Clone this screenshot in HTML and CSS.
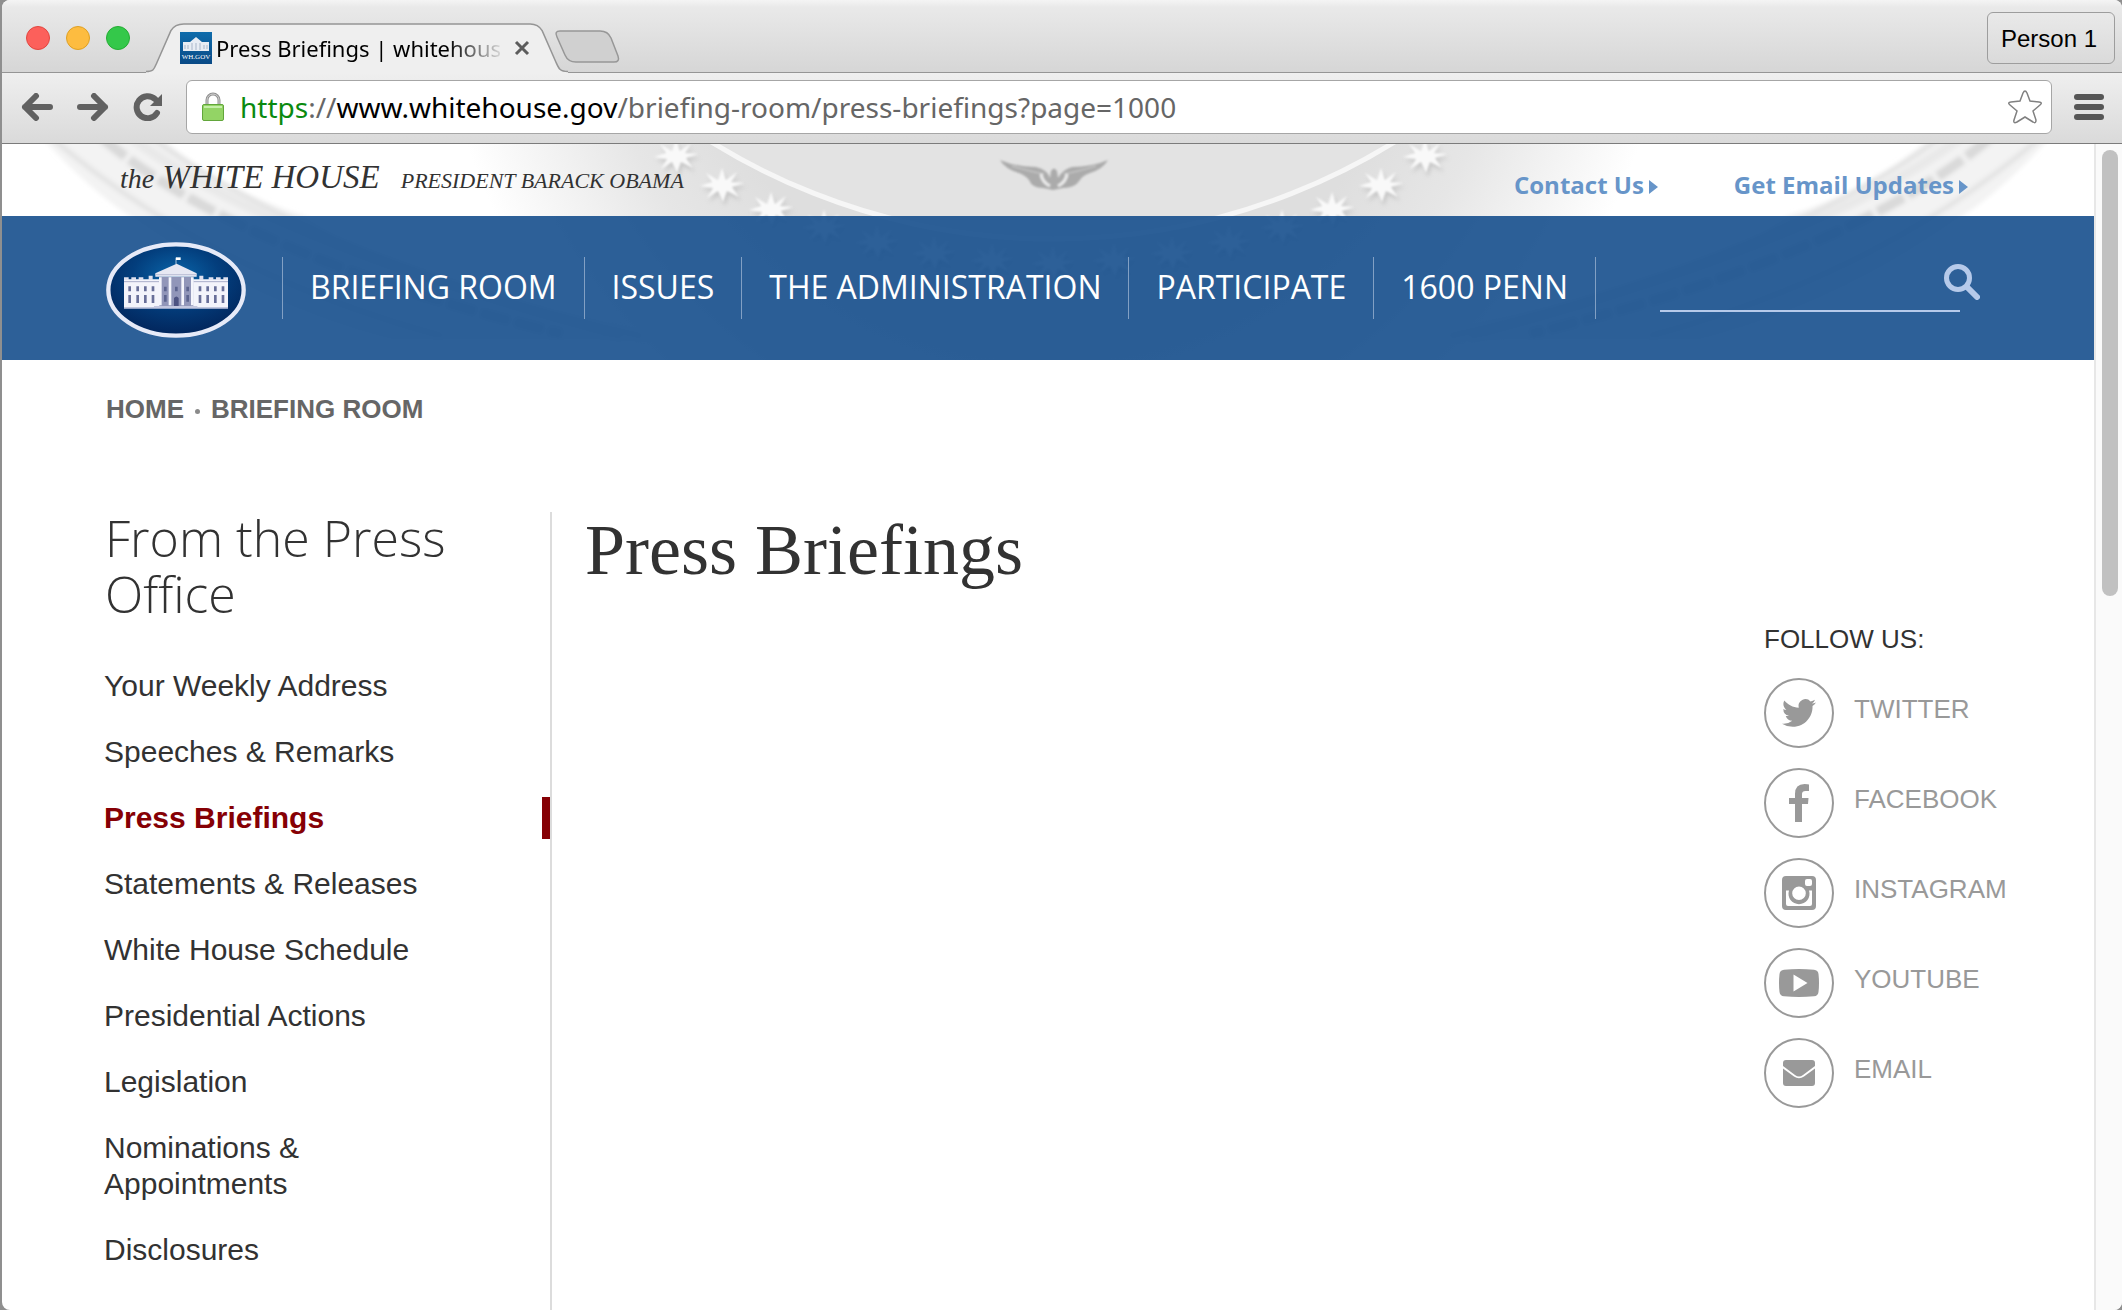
FILE: index.html
```
<!DOCTYPE html>
<html lang="en">
<head>
    <meta charset="UTF-8">
    <meta name="viewport" content="width=device-width, initial-scale=1.0">
    <title>Press Briefings | whitehouse.gov</title>
    <link rel="stylesheet" href="styles.css">
</head>
<body>
<div class="window">
    <!-- Tab strip -->
    <div class="tabstrip">
        <div class="lights">
            <button class="light red" aria-label="Close"></button>
            <button class="light yellow" aria-label="Minimize"></button>
            <button class="light green" aria-label="Zoom"></button>
        </div>
        <div class="tab">
            <svg class="tab-shape" viewBox="0 0 430 52" preserveAspectRatio="none">
                <path d="M0 50.500C8 50.500 8 48 11 41L25 8Q29 1 38 1H386Q394 1 398 8L412 41C415 48 416 50.500 424 50.500V52H0Z" fill="#efefef"/>
                <path d="M0 50.500C8 50.500 8 48 11 41L25 8Q29 1 38 1H386Q394 1 398 8L412 41C415 48 416 50.500 424 50.500" fill="none" stroke="#959595" stroke-width="1.500"/>
            </svg>
            <svg class="favicon" viewBox="0 0 32 32">
                <defs>
                    <linearGradient id="favbg" x2="0" y2="1">
                        <stop offset="0" stop-color="#0f6cab"/>
                        <stop offset="1" stop-color="#0a4a86"/>
                    </linearGradient>
                </defs>
                <rect width="32" height="32" fill="url(#favbg)"/>
                <path d="M3 10h7l6-5 6 5h7v9H3Z" fill="#e8edf4"/>
                <path d="M5 13v4M8 13v4M12 11v7M16 11v7M20 11v7M24 13v4M27 13v4" stroke="#a9b6c9"/>
                <text x="16" y="27" text-anchor="middle">WH.GOV</text>
            </svg>
            <span class="tab-title">Press Briefings | whitehous</span>
            <button class="tab-close" aria-label="Close tab">
                <svg viewBox="0 0 16 16" width="16" height="16"><path d="M2 2L14 14M14 2L2 14" stroke="#5c5c5c" stroke-width="3"/></svg>
            </button>
        </div>
        <button class="new-tab" aria-label="New tab">
            <svg viewBox="0 0 66 34" width="66" height="34"><path d="M6 1H46Q54 1 57 8L64 26Q66 32 60 32H22Q14 32 11 25L3 7Q0 1 6 1Z" fill="#d0d0d0" stroke="#979797" stroke-width="1.500"/></svg>
        </button>
        <button class="person">Person 1</button>
    </div>

    <!-- Toolbar -->
    <div class="toolbar">
        <button class="tool" aria-label="Back">
            <svg viewBox="0 0 32 28" width="32" height="28"><path d="M15 3L4 14L15 25M4 14H29" /></svg>
        </button>
        <button class="tool" aria-label="Forward">
            <svg viewBox="0 0 32 28" width="32" height="28"><path d="M17 3L28 14L17 25M28 14H3" /></svg>
        </button>
        <button class="tool" aria-label="Reload">
            <svg viewBox="0 0 32 28" width="32" height="28"><path d="M24 20A11 11 0 1 1 22 6" /><path class="solid" d="M29 1V13H17Z"/></svg>
        </button>
        <div class="address">
            <svg class="lock" viewBox="0 0 24 30" width="24" height="30">
                <path d="M6 14V8a6 6 0 0 1 12 0v6" fill="none" stroke="#909090" stroke-width="3"/>
                <path d="M6 14V8a6 6 0 0 1 12 0v6" fill="none" stroke="#d2d2d2"/>
                <rect x="1.500" y="12.500" width="21" height="16" rx="1.500" fill="#93d465" stroke="#62a63b"/>
                <path d="M3 15H21" stroke="#c5efa8" stroke-width="2"/>
            </svg>
            <div class="url" role="textbox" aria-label="Address"><span class="scheme">https</span>://<span class="host">www.whitehouse.gov</span>/briefing-room/press-briefings?page=1000</div>
            <button class="star" aria-label="Bookmark">
                <svg viewBox="0 0 36 36" width="36" height="36"><path d="M18 2Q19 2 20 4L23 12L32 13Q36 13.500 33 16L26 22L29 31Q29 35 26 33L18 28L10 33Q6 35 7 31L10 22L3 16Q0 13.500 4 13L13 12L16 4Q17 2 18 2Z" fill="#fff" stroke="#808080" stroke-width="1.500"/></svg>
            </button>
        </div>
        <button class="menu" aria-label="Menu"><i></i><i></i><i></i></button>
    </div>

    <div class="viewport">
        <div class="page">
            <header class="header">
                <!-- Presidential seal behind the header -->
                <svg class="seal" viewBox="0 0 2092 216" preserveAspectRatio="xMidYMin slice" aria-hidden="true">
                    <defs>
                        <radialGradient id="fade" gradientUnits="userSpaceOnUse" cx="1051" cy="-200" r="620">
                            <stop offset="0.600" stop-color="#dedede"/>
                            <stop offset="0.750" stop-color="#e6e6e6"/>
                            <stop offset="1" stop-color="#fff"/>
                        </radialGradient>
                        <filter id="soft"><feGaussianBlur stdDeviation="2"/></filter>
                        <filter id="edge"><feGaussianBlur stdDeviation="1"/></filter>
                        <g id="star">
                            <path d="M0-17L4-5L15-13L9-3L22-2L10 2L17 12L5 6L1 17L-4 6L-15 13L-9 3L-22 1L-10-3L-16-12L-4-5Z"/>
                        </g>
                        <g id="stars">
                            <use href="#star" x="674" y="12"/><use href="#star" x="720" y="41"/><use href="#star" x="769" y="65"/><use href="#star" x="822" y="83"/>
                            <use href="#star" x="875" y="98"/><use href="#star" x="932" y="109"/><use href="#star" x="990" y="116"/><use href="#star" x="1051" y="119"/>
                            <use href="#star" x="1112" y="116"/><use href="#star" x="1170" y="109"/><use href="#star" x="1227" y="98"/><use href="#star" x="1280" y="83"/>
                            <use href="#star" x="1330" y="65"/><use href="#star" x="1379" y="41"/><use href="#star" x="1423" y="12"/>
                        </g>
                        <g id="ribbon" filter="url(#soft)">
                            <path d="M40-6H160Q220 46 303 72Q410 150 560 168Q610 184 652 196H390Q250 160 128 72Q90 48 40-6Z" fill="#f3f3f3"/>
                            <path d="M100-6Q240 112 560 190" fill="none" stroke="#d9d9d9" stroke-width="10" stroke-dasharray="30 5"/>
                            <path d="M130-6Q270 100 620 192" fill="none" stroke="#e9e9e9" stroke-width="10"/>
                            <path d="M50-6Q210 130 440 192M150-6Q310 112 640 192" fill="none" stroke="#e3e3e3" stroke-width="5"/>
                        </g>
                    </defs>
                    <rect width="2092" height="216" fill="#fff"/>
                    <rect x="430" width="1242" height="216" fill="url(#fade)"/>
                    <use href="#ribbon"/>
                    <use href="#ribbon" transform="translate(2088 0) scale(-1 1)"/>
                    <circle cx="1051" cy="-554" r="649" fill="#e3e3e3" stroke="#f6f6f6" stroke-width="5"/>
                    <use href="#stars" fill="#bdbdbd" opacity="0.700" transform="translate(2 4)" filter="url(#soft)"/>
                    <use href="#stars" fill="#f9f9f9" filter="url(#edge)"/>
                    <g filter="url(#edge)">
                        <path d="M998 16Q1014 23 1034 23Q1046 26 1048 34L1049 27Q1052 22 1055 27L1056 34Q1060 26 1070 23Q1090 23 1106 16Q1101 25 1088 29Q1080 32 1078 36Q1073 44 1061 44L1051 46L1041 44Q1030 44 1027 36Q1024 32 1017 29Q1003 25 998 16Z" fill="#ababab"/>
                        <path d="M1010 22Q1030 28 1042 30M1094 22Q1074 28 1062 30" fill="none" stroke="#d0d0d0" stroke-width="1"/>
                        <path d="M1039 30Q1040 38 1048 42M1065 30Q1064 38 1056 42" fill="none" stroke="#ececec" stroke-width="3"/>
                    </g>
                </svg>

                <div class="masthead">
                    <a href="#" class="brand"><span class="brand-the">the</span> WHITE HOUSE</a>
                    <a href="#" class="president">PRESIDENT BARACK OBAMA</a>
                    <div class="links">
                        <a href="#">Contact Us</a>
                        <a href="#">Get Email Updates</a>
                    </div>
                </div>

                <nav class="nav">
                    <a href="#" class="logo" aria-label="The White House">
                        <svg viewBox="0 0 420 288" width="140" height="96">
                            <defs>
                                <radialGradient id="oval" cx="0.500" cy="0.350" r="0.650">
                                    <stop offset="0" stop-color="#0a66aa"/>
                                    <stop offset="0.500" stop-color="#033e7d"/>
                                    <stop offset="1" stop-color="#02255b"/>
                                </radialGradient>
                            </defs>
                            <ellipse cx="210" cy="144" rx="203" ry="137" fill="url(#oval)" stroke="#e6eaf8" stroke-width="13"/>
                            <path d="M54 112H366V197H54Z" fill="#f3f4fb"/>
                            <path d="M54 106h14v8H54zM76 106h14v8H76zM98 106h14v8H98zM128 101h12v13h-12zM280 101h12v13h-12zM308 106h14v8h-14zM330 106h14v8h-14zM352 106h14v8h-14z" fill="#dfe1ef"/>
                            <path d="M54 119H366" stroke="#aaaec9" stroke-width="3"/>
                            <path d="M160 104H262V197H160Z" fill="#9196b9"/>
                            <path d="M148 94L212 65L272 94V104H148Z" fill="#e7e8f3"/>
                            <path d="M148 98H272" stroke="#babdd5" stroke-width="3"/>
                            <path d="M163 106V190M192 106V190M230 106V190M259 106V190" stroke="#f4f5fc" stroke-width="8"/>
                            <path d="M178 134v14M178 159v20M211 134v14M245 134v14M245 159v20" stroke="#5c648f" stroke-width="8"/>
                            <path d="M204 195v-27q7-9 14 0v27z" fill="#4d5382"/>
                            <path d="M71 133v15M95 133v15M118 133v15M141 133v15M282 133v15M305 133v15M328 133v15M351 133v15M71 159v24M95 159v24M118 159v24M141 159v24M282 159v24M305 159v24M328 159v24M351 159v24" stroke="#686f99" stroke-width="8"/>
                            <path d="M54 198H366M144 194H274" stroke="#c3c7df" stroke-width="4"/>
                            <path d="M210 67V47" stroke="#fff" stroke-width="2"/>
                            <path d="M210 46h14v8h-14z" fill="#fff"/>
                        </svg>
                    </a>
                    <ul class="nav-list">
                        <li><a href="#">BRIEFING ROOM</a></li>
                        <li><a href="#">ISSUES</a></li>
                        <li><a href="#">THE ADMINISTRATION</a></li>
                        <li><a href="#">PARTICIPATE</a></li>
                        <li><a href="#">1600 PENN</a></li>
                    </ul>
                    <form class="search">
                        <input type="text" aria-label="Search">
                        <button type="button" aria-label="Search">
                            <svg viewBox="0 0 36 36" width="36" height="36"><circle cx="14" cy="14" r="11.500" fill="none" stroke="#b6caea" stroke-width="5"/><path d="M23 23L33 33" stroke="#b6caea" stroke-width="6" stroke-linecap="round"/></svg>
                        </button>
                    </form>
                </nav>
            </header>

            <div class="breadcrumb">
                <a href="#">HOME</a><span class="dot"></span><a href="#">BRIEFING ROOM</a>
            </div>

            <div class="content">
                <aside class="sidebar">
                    <h2>From the Press Office</h2>
                    <ul>
                        <li><a href="#">Your Weekly Address</a></li>
                        <li><a href="#">Speeches &amp; Remarks</a></li>
                        <li class="active"><a href="#">Press Briefings</a></li>
                        <li><a href="#">Statements &amp; Releases</a></li>
                        <li><a href="#">White House Schedule</a></li>
                        <li><a href="#">Presidential Actions</a></li>
                        <li><a href="#">Legislation</a></li>
                        <li><a href="#">Nominations &amp; Appointments</a></li>
                        <li><a href="#">Disclosures</a></li>
                    </ul>
                </aside>

                <main class="main">
                    <h1>Press Briefings</h1>
                </main>

                <div class="follow">
                    <h3>FOLLOW US:</h3>
                    <a href="#">
                        <span class="circle"><svg viewBox="0 0 24 24" width="34" height="34"><path d="M23.950 4.570a10 10 0 0 1-2.820.770 4.960 4.960 0 0 0 2.160-2.720c-.950.550-2.010.960-3.130 1.180a4.920 4.920 0 0 0-8.380 4.480C7.690 8.090 4.070 6.130 1.640 3.160a4.820 4.820 0 0 0-.670 2.480c0 1.710.870 3.210 2.190 4.100a4.900 4.900 0 0 1-2.230-.620v.060a4.920 4.920 0 0 0 3.950 4.830 5 5 0 0 1-2.210.080 4.940 4.940 0 0 0 4.600 3.420A9.870 9.870 0 0 1 0 19.540a13.990 13.990 0 0 0 7.550 2.210c9.050 0 14-7.500 14-13.980 0-.210 0-.420-.020-.630a9.940 9.940 0 0 0 2.460-2.550z"/></svg></span>
                        <span class="name">TWITTER</span>
                    </a>
                    <a href="#">
                        <span class="circle"><svg viewBox="0 0 20 38" width="20" height="38"><path d="M20 .500V7H16.500Q13 7 13 10V14H19.500L19 20H13V38H6V20H0V14H6V10Q6 0 15.500 0Q19 0 20 .500Z"/></svg></span>
                        <span class="name">FACEBOOK</span>
                    </a>
                    <a href="#">
                        <span class="circle"><svg viewBox="0 0 34 34" width="34" height="34"><path fill-rule="evenodd" d="M4 0H30Q34 0 34 4V30Q34 34 30 34H4Q0 34 0 30V4Q0 0 4 0ZM25 3Q23 3 23 5V8Q23 10 25 10H28Q30 10 30 8V5Q30 3 28 3ZM4 14.500V28Q4 30 6 30H28Q30 30 30 28V14.500H27A10.500 10.500 0 1 1 7 14.500ZM17 10.500A6.800 6.800 0 1 0 17 24.100A6.800 6.800 0 1 0 17 10.500Z"/></svg></span>
                        <span class="name">INSTAGRAM</span>
                    </a>
                    <a href="#">
                        <span class="circle"><svg viewBox="0 0 40 28" width="40" height="28"><path fill-rule="evenodd" d="M5 .700Q20-.700 35 .700Q39 1 39.500 5Q40.500 14 39.500 23Q39 27 35 27.300Q20 28.700 5 27.300Q1 27 .500 23Q-.500 14 .500 5Q1 1 5 .700ZM14.500 5.500V22.500L28.500 14Z"/></svg></span>
                        <span class="name">YOUTUBE</span>
                    </a>
                    <a href="#">
                        <span class="circle"><svg viewBox="0 0 32 26" width="32" height="26"><path d="M3 0H29Q32 0 32 3V6L20 15Q16 18 12 15L0 6V3Q0 0 3 0Z"/><path d="M0 8.500L11 16.500Q16 20 21 16.500L32 8.500V23Q32 26 29 26H3Q0 26 0 23Z"/></svg></span>
                        <span class="name">EMAIL</span>
                    </a>
                </div>
            </div>
        </div>
        <div class="scrollbar"><div class="thumb"></div></div>
    </div>
</div>
</body>
</html>
```
FILE: styles.css
```
* {
    box-sizing: border-box;
}

body {
    margin: 0;
    background-color: #8f8f8f;
    font-family: "Liberation Sans", Arial, sans-serif;
    color: #323232;
}

a {
    color: inherit;
    text-decoration: none;
}

button {
    padding: 0;
    border: none;
    background: none;
    font-family: inherit;
    cursor: pointer;
}

ul {
    list-style: none;
    margin: 0;
    padding: 0;
}

svg {
    display: block;
}

.window {
    display: flex;
    flex-direction: column;
    height: 100vh;
    margin-left: 2px;
    border-radius: 8px;
    overflow: hidden;
    background-color: #fff;
}

/* tab strip */
.tabstrip {
    display: flex;
    align-items: flex-end;
    height: 73px;
    padding-right: 7px;
    border-bottom: 1px solid #959595;
    background: linear-gradient(#f4f4f4, #e9e9e9 10%, #d6d6d6);
}

.lights {
    display: flex;
    gap: 16px;
    padding: 0 16px 22px 24px;
}

.light {
    width: 24px;
    height: 24px;
    border-radius: 50%;
}

.red {
    background-color: #fc605b;
    border: 1px solid #e2463f;
}

.yellow {
    background-color: #fdbc40;
    border: 1px solid #dfa023;
}

.green {
    background-color: #34c84a;
    border: 1px solid #24ad33;
}

.tab {
    position: relative;
    display: flex;
    align-items: center;
    width: 428px;
    height: 50px;
    margin-bottom: -1px;
    padding: 0 44px 0 34px;
}

.tab-shape {
    position: absolute;
    left: 0;
    top: 0;
    width: 100%;
    height: 100%;
}

.favicon {
    position: relative;
    flex: none;
    width: 32px;
    height: 32px;
}

.favicon text {
    font: 7px "Liberation Serif", serif;
    fill: #fff;
}

.tab-title {
    position: relative;
    flex: 1;
    margin: 0 8px 0 4px;
    white-space: nowrap;
    font: 22px "Noto Sans", sans-serif;
    color: #000;
    -webkit-mask-image: linear-gradient(to right, #000 80%, transparent);
    mask-image: linear-gradient(to right, #000 80%, transparent);
}

.tab-close {
    position: relative;
}

.new-tab {
    margin: 0 auto 8px -20px;
}

.person {
    width: 128px;
    height: 52px;
    margin-bottom: 8px;
    padding: 2px 4px 0 0;
    border: 1px solid #9d9d9d;
    border-radius: 6px;
    background: linear-gradient(#e9e9e9, #dadada);
    font-size: 24px;
    color: #000;
}

/* toolbar */
.toolbar {
    display: flex;
    align-items: center;
    height: 71px;
    padding: 0 18px 2px 19px;
    border-bottom: 1px solid #7b7b7b;
    background: linear-gradient(#efefef, #dadada);
}

.tool {
    margin-right: 24px;
}

.tool svg {
    fill: none;
    stroke: #616161;
    stroke-width: 6;
    stroke-linecap: round;
    stroke-linejoin: round;
}

.tool .solid {
    fill: #616161;
    stroke: none;
}

.address {
    display: flex;
    align-items: center;
    flex: 1;
    height: 54px;
    margin-right: 22px;
    margin-left: -3px;
    padding: 0 8px 0 14px;
    border: 1px solid #a6a6a6;
    border-radius: 6px;
    background-color: #fff;
}

.url {
    flex: 1;
    margin-left: 15px;
    font: 28px "Noto Sans", sans-serif;
    color: #666;
}

.scheme {
    color: #0a8a0f;
}

.host {
    color: #000;
}

.menu {
    display: flex;
    flex-direction: column;
    gap: 4px;
}

.menu i {
    width: 30px;
    height: 6px;
    border-radius: 3px;
    background-color: #565656;
}

/* page */
.viewport {
    display: flex;
    flex: 1;
    min-height: 0;
}

.page {
    display: flex;
    flex-direction: column;
    flex: 1;
}

.scrollbar {
    width: 28px;
    padding: 6px 3px 0 6px;
    border-left: 2px solid #e7e7e7;
    background-color: #fafafa;
}

.thumb {
    width: 16px;
    height: 446px;
    border-radius: 8px;
    background-color: #c1c1c1;
}

.header {
    position: relative;
}

.seal {
    position: absolute;
    left: 0;
    top: 0;
    width: 100%;
    height: 100%;
}

.masthead {
    position: relative;
    display: flex;
    align-items: baseline;
    height: 72px;
    padding: 15px 126px 0 118px;
    font-family: "Liberation Serif", serif;
    font-style: italic;
}

.brand {
    font-size: 33px;
}

.brand-the {
    font-size: 28px;
}

.president {
    margin-left: 21px;
    font-size: 22px;
}

.links {
    display: flex;
    align-self: flex-start;
    gap: 76px;
    margin: 9px 0 0 auto;
    font: bold 24px/34px "Open Sans", sans-serif;
    color: #6795c9;
}

.links a {
    display: flex;
    align-items: center;
    gap: 5px;
}

.links a::after {
    content: "";
    margin-top: 3px;
    border: 7px solid transparent;
    border-left: 9px solid #6795c9;
    border-right: none;
}

.nav {
    position: relative;
    display: flex;
    align-items: center;
    height: 144px;
    padding: 0 114px 0 104px;
    background-color: rgba(22, 79, 141, 0.9);
}

.logo {
    margin: 4px 36px 0 0;
}

.nav-list {
    display: flex;
    border-right: 1px solid #82a0c4;
}

.nav-list li {
    padding: 0 27px;
    border-left: 1px solid #82a0c4;
    font: 32px/64px "Open Sans", sans-serif;
    color: #fff;
}

.nav-list a {
    display: block;
    margin-top: -2px;
}

.search {
    display: flex;
    margin-left: auto;
}

.search input {
    width: 300px;
    height: 48px;
    margin-right: -16px;
    border: none;
    border-bottom: 2px solid #b6caea;
    outline: none;
    background: none;
    font-size: 24px;
    color: #fff;
}

.search button {
    align-self: flex-start;
}

.breadcrumb {
    display: flex;
    align-items: center;
    padding: 34px 104px 0;
    font-size: 26px;
    line-height: 30px;
    font-weight: bold;
    color: #666;
}

.dot {
    width: 5px;
    height: 5px;
    margin: 4px 11px 0;
    border-radius: 50%;
    background-color: #8a8a8a;
}

.content {
    display: flex;
    flex: 1;
    margin-top: 88px;
    padding: 0 84px 0 102px;
}

.sidebar {
    flex: none;
    width: 448px;
    border-right: 2px solid #dcdcdc;
}

.sidebar h2 {
    width: 360px;
    margin: -2px 0 43px 1px;
    font: 300 50px/56px "Open Sans", sans-serif;
}

.sidebar li {
    margin-bottom: 24px;
    padding: 3px 100px 3px 0;
    font-size: 30px;
    line-height: 36px;
}

.sidebar li.active {
    border-right: 8px solid #860005;
    font-weight: bold;
    color: #860005;
}

.main {
    flex: 1;
    padding-left: 33px;
}

.main h1 {
    margin: 0;
    font: 72px/76px "Liberation Serif", serif;
}

.follow {
    flex: none;
    width: 246px;
    padding-top: 112px;
}

.follow h3 {
    margin: 0 0 24px;
    font-size: 26px;
    line-height: 30px;
    font-weight: normal;
}

.follow a {
    display: flex;
    align-items: center;
    margin-bottom: 20px;
    color: #999;
}

.circle {
    display: flex;
    align-items: center;
    justify-content: center;
    width: 70px;
    height: 70px;
    margin-right: 20px;
    border: 2px solid #999;
    border-radius: 50%;
    fill: #999;
}

.name {
    padding-bottom: 8px;
    font-size: 26px;
}
```
